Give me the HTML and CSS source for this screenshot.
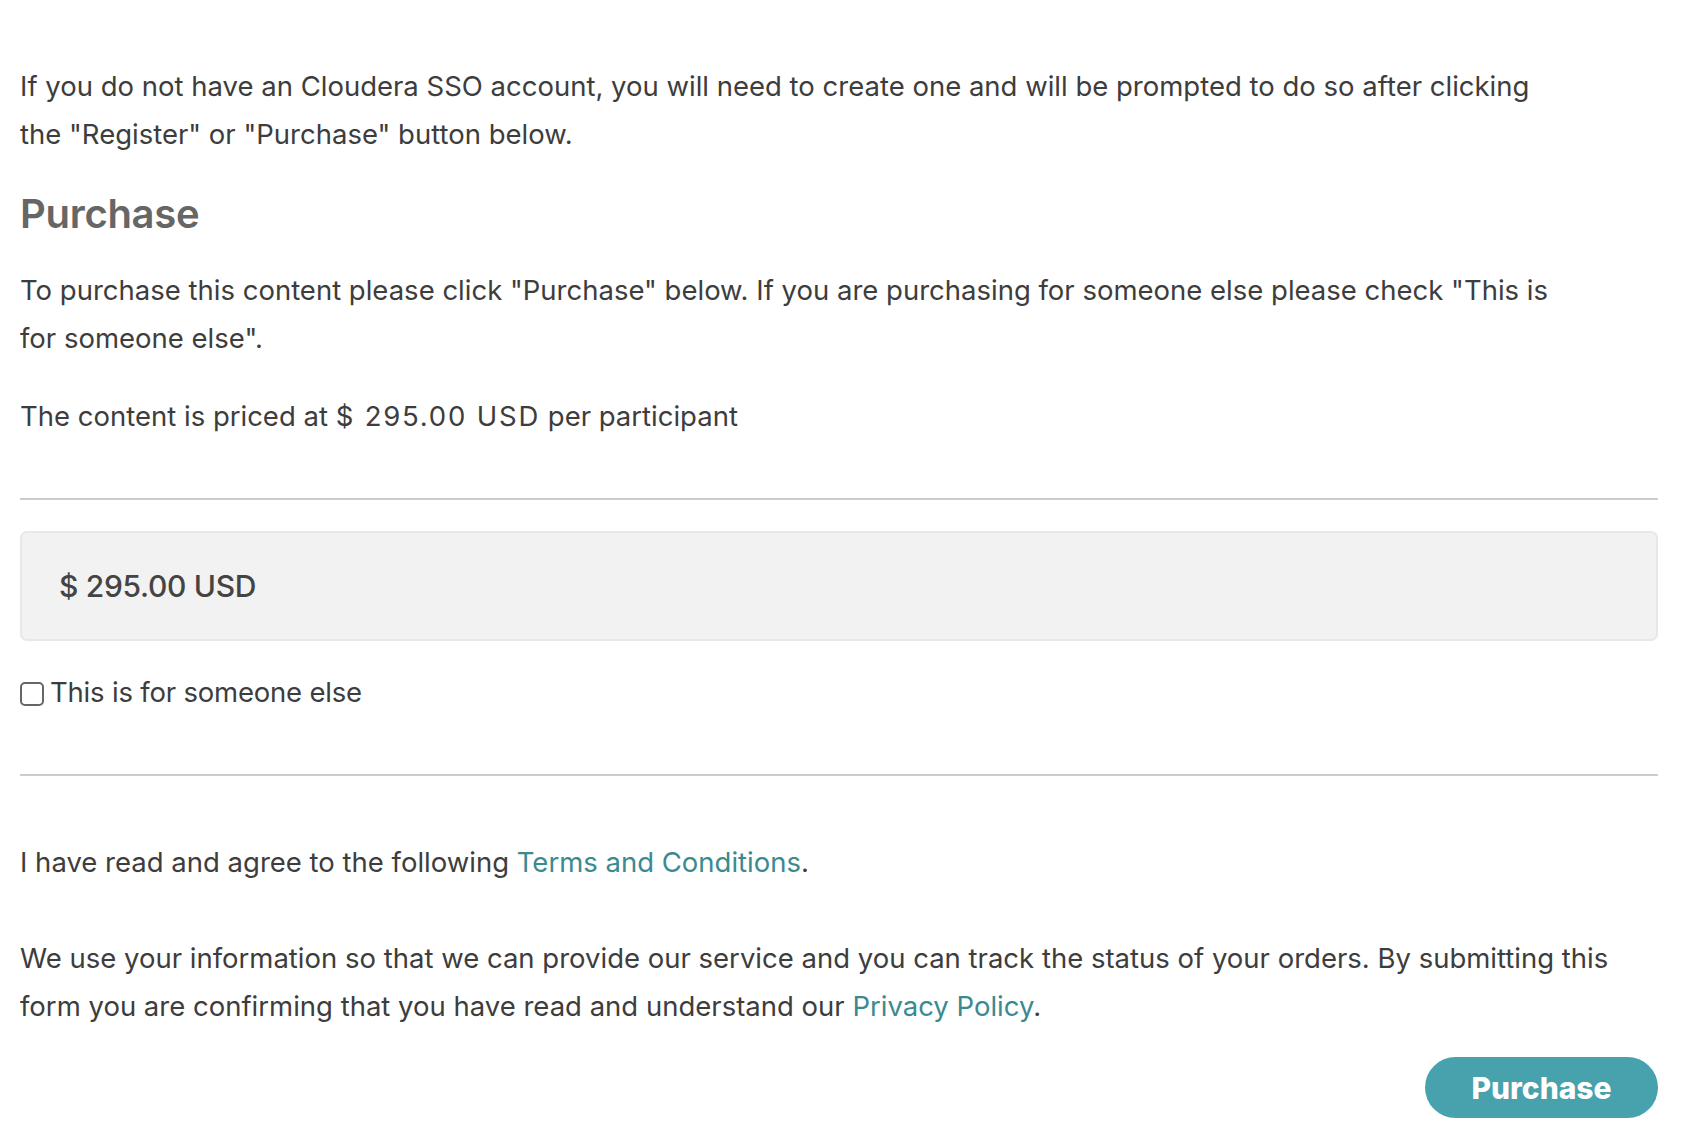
FILE: index.html
```html
<!DOCTYPE html>
<html lang="en">
<head>
    <meta charset="UTF-8">
    <title>Purchase</title>
    <link rel="stylesheet" href="styles.css">
</head>
<body>
    <div class="purchase-page">
        <p class="intro narrow">If you do not have an Cloudera SSO account, you will need to create one and will be prompted to do so after clicking the "Register" or "Purchase" button below.</p>

        <h2>Purchase</h2>
        <p class="narrow">To purchase this content please click "Purchase" below. If you are purchasing for someone else please check "This is for someone else".</p>
        <p>The content is priced at <span class="amount">$ 295.00 USD</span> per participant</p>

        <hr>

        <div class="price-box">$ 295.00 USD</div>

        <label class="someone-else">
            <input type="checkbox" name="someone_else">
            <span>This is for someone else</span>
        </label>

        <hr>

        <p class="terms">I have read and agree to the following <a href="#">Terms and Conditions</a>.</p>
        <p class="privacy">We use your information so that we can provide our service and you can track the status of your orders. By submitting this form you are confirming that you have read and understand our <a href="#">Privacy Policy</a>.</p>

        <div class="actions">
            <button type="submit">Purchase</button>
        </div>
    </div>
</body>
</html>
```

FILE: styles.css
```css
body {
    margin: 0;
    font-family: Inter, 'Liberation Sans', sans-serif;
    background-color: #fff;
    color: #3d3d3d;
}

.purchase-page {
    width: 1638px;
    padding: 62px 0 20px 20px;
}

p {
    margin: 0 0 30px 0;
    font-size: 27.5px;
    line-height: 48px;
}

.narrow {
    max-width: 1540px;
}

.amount {
    letter-spacing: 1.8px;
}

.intro {
    margin-bottom: 31px;
}

h2 {
    margin: 0 0 27px 0;
    font-size: 40px;
    line-height: 50px;
    font-weight: 600;
    color: #666;
    letter-spacing: -0.3px;
}

hr {
    border: none;
    border-top: 2px solid #ccc;
    margin: 58px 0 31px 0;
}

.price-box {
    height: 106px;
    display: flex;
    align-items: center;
    padding: 0 37px;
    background-color: #f2f2f2;
    border: 2px solid #e8e8e8;
    border-radius: 7px;
    font-size: 30px;
    font-weight: 500;
    letter-spacing: -0.3px;
    color: #444;
}

.someone-else {
    display: flex;
    align-items: center;
    gap: 6px;
    margin-top: 27px;
    font-size: 27.5px;
    line-height: 48px;
    letter-spacing: -0.2px;
}

.someone-else input {
    appearance: none;
    width: 24px;
    height: 24px;
    margin: 4px 0 0 0;
    border: 2px solid #666;
    border-radius: 5px;
    background: #fff;
}

.terms {
    margin-top: 62px;
    margin-bottom: 48px;
}

.privacy {
    margin-bottom: 27px;
}

a {
    color: #3a8a90;
    text-decoration: none;
}

.actions {
    display: flex;
    justify-content: flex-end;
}

button {
    width: 233px;
    height: 61px;
    border: none;
    border-radius: 31px;
    background-color: #47a2ad;
    color: #fff;
    font-family: Inter, 'Liberation Sans', sans-serif;
    font-size: 30px;
    font-weight: 800;
    cursor: pointer;
}
```
